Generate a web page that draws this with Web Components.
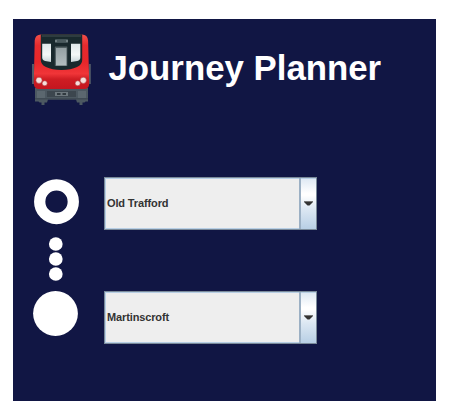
<!DOCTYPE html>
<html lang="en">
<head>
<meta charset="utf-8">
<title>Journey Planner</title>
<style>
body{margin:0;background:#fff;font-family:"Liberation Sans",Arial,sans-serif}
</style>
</head>
<body>
<journey-planner></journey-planner>
<script>
function define(name, html) {
  customElements.define(name, class extends HTMLElement {
    constructor() {
      super();
      const t = document.createElement('template');
      t.innerHTML = html;
      this.attachShadow({mode: 'open'}).append(t.content.cloneNode(true));
    }
  });
}

define('train-icon', `
<style>:host{display:block;width:62px;height:74px}svg{display:block}</style>
<svg width="62" height="74" viewBox="30 32 62 74">
  <defs>
    <linearGradient id="red" x1="0" y1="0" x2="0" y2="1">
      <stop offset="0" stop-color="#f2504a"/><stop offset=".2" stop-color="#e62b2e"/><stop offset=".5" stop-color="#e8262a"/>
      <stop offset=".72" stop-color="#f03538"/><stop offset=".82" stop-color="#cf1d23"/><stop offset="1" stop-color="#c4161f"/>
    </linearGradient>
    <linearGradient id="win" x1="0" y1="0" x2="0" y2="1">
      <stop offset="0" stop-color="#dfe8ea"/><stop offset=".6" stop-color="#f4f8f8"/><stop offset="1" stop-color="#c9d6da"/>
    </linearGradient>
    <linearGradient id="door" x1="0" y1="0" x2="0" y2="1">
      <stop offset="0" stop-color="#94a0a3"/><stop offset="1" stop-color="#b3bdbf"/>
    </linearGradient>
  </defs>
  <path d="M32 64h2v20h-2zM88.800 64h2v20h-2z" fill="#525b68"/>
  <path d="M35 88h53v13.500h-2.500l-1 1h-2v2.500h-3v-2.500h-2.500l-1-3h-28l-1 3H44.500v2.500h-3v-2.500h-2l-1-1H35z" fill="#4c5861"/>
  <path d="M47 91h29v6H47z" fill="#3c464e"/>
  <path d="M37 91h8v8h-8zM78 91h8v8h-8z" fill="#5b676f"/>
  <path d="M35 98h53v1.500H35z" fill="#404b54"/>
  <rect x="55" y="92" width="13" height="4" fill="#6d777d"/>
  <path d="M57 93h3.500v2H57zM62.500 93H66v2h-3.500z" fill="#30393f"/>
  <path d="M41 34.500h41q5.600 0 6.100 6l1.100 42q.3 6.500-4.500 6.500H38.500q-5 0-4.700-6.500l.9-42q.5-6 6.300-6z" fill="url(#red)"/>
  <path d="M41.500 34.300h40q.7 0 .7 1V60q0 4.500-5.200 7-6 2.900-15.500 2.900T46 67q-5.200-2.500-5.200-7V35.300q0-1 .7-1z" fill="#19292d"/>
  <path d="M42 34.500h39V37H42z" fill="#2e3c40"/>
  <path d="M42.200 43.700H51v18.200l-5.800-.9q-3-1-3-3.500z" fill="url(#win)"/>
  <path d="M80.300 43.700h-9.300v18.200l6.300-.9q3-1 3-3.500z" fill="url(#win)"/>
  <rect x="55" y="39.500" width="13" height="3" rx=".5" fill="#718083"/>
  <path d="M57 41h9" stroke="#26373b"/>
  <rect x="54.800" y="46.500" width="12.500" height="19.500" rx=".5" fill="#526063"/>
  <rect x="56" y="48" width="10.500" height="17.500" fill="url(#door)"/>
  <g fill="#f6dfdc" stroke="#a83a3b" stroke-width=".5">
    <circle cx="39" cy="80.300" r="3.100"/><circle cx="44.700" cy="83.300" r="2.500"/>
    <circle cx="83.300" cy="80.300" r="3.100"/><circle cx="77.700" cy="83.300" r="2.500"/>
  </g>
</svg>`);

define('route-track', `
<style>:host{display:block;width:50px;height:160px}svg{display:block}</style>
<svg width="50" height="160" viewBox="31 177 50 160">
  <circle cx="56.500" cy="201.700" r="16.800" fill="none" stroke="#fff" stroke-width="11.300"/>
  <g fill="#fff"><circle cx="55.800" cy="244" r="6.850"/><circle cx="55.800" cy="259" r="6.850"/><circle cx="55.800" cy="274" r="6.850"/>
  <circle cx="55.500" cy="313.500" r="22.400"/></g>
</svg>`);

define('station-select', `
<style>
:host{display:flex;box-sizing:border-box;width:213px;height:53px;border:1px solid #7a8a99;background:#eee;color:#333;font-size:11px;font-weight:bold}
.value{flex:1;display:flex;align-items:center;padding:0 0 2px 2px;letter-spacing:-.13px;box-shadow:inset 1px 1px #b8cfe5,inset 0 -1px #b8cfe5}
.button{box-sizing:border-box;width:17px;border-left:2px solid #9cb0c4;box-shadow:inset 0 1px #b8cfe5,inset 0 -1px #b8cfe5;background:linear-gradient(#dde8f3,#fff 30%,#fff 34%,#dde8f3 60%,#b8cfe5);display:flex;align-items:center;justify-content:center}
svg{display:block}
</style>
<div class="value"><slot></slot></div>
<div class="button"><svg width="9" height="5" viewBox="0 0 9 5"><path d="M0 0h9v1L5.500 4.500h-2L0 1z" fill="#333"/><path d="M0 0h9v1H0z" fill="#777"/></svg></div>`);

define('journey-planner', `
<style>
:host{display:block;box-sizing:border-box;width:423px;height:382px;margin:19px 0 0 13px;padding:13px 0 0 17px;background:#111644;color:#fff}
header{display:flex;height:74px}
h1{margin:14px 0 0 16.500px;font-size:34.800px;line-height:43px;font-weight:bold;white-space:nowrap}
main{display:flex;margin:71px 0 0 1px;gap:23px}
.fields{display:flex;flex-direction:column;gap:61px}
</style>
<header><train-icon></train-icon><h1>Journey Planner</h1></header>
<main><route-track></route-track>
<div class="fields"><station-select>Old Trafford</station-select><station-select>Martinscroft</station-select></div></main>`);
</script>
</body>
</html>
